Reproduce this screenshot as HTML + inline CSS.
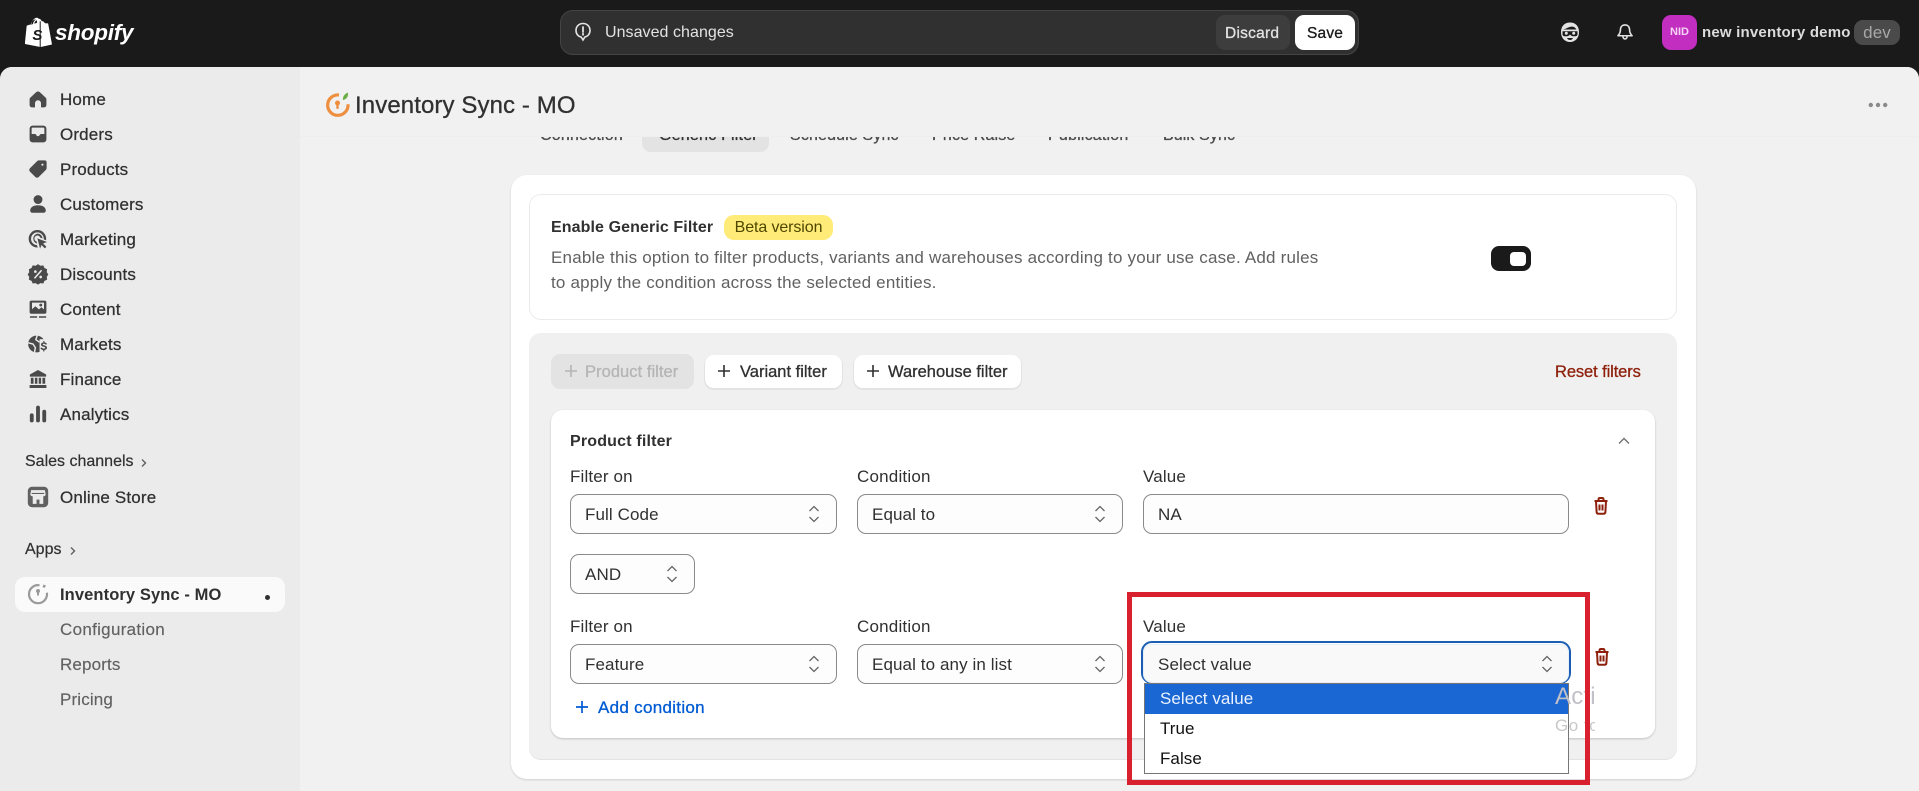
<!DOCTYPE html>
<html lang="en"><head><meta charset="utf-8"><title>Inventory Sync - MO</title>
<style>
*{box-sizing:border-box;margin:0;padding:0}
html,body{width:1919px;height:791px;overflow:hidden;background:#1a1a1a}
body{position:relative;font-family:"Liberation Sans",Arial,sans-serif;font-size:17px;color:#303030}
#w{position:absolute;left:0;top:0;width:1919px;height:791px;overflow:hidden;filter:blur(.3px)}
.a{position:absolute}
.t{position:absolute;white-space:nowrap;line-height:20px;letter-spacing:.15px;margin-top:1px}
.m{-webkit-text-stroke:.3px currentColor}
.nav{left:60px;color:#303030;-webkit-text-stroke:.25px #303030}
.sub{left:60px;color:#616161;-webkit-text-stroke:.15px #616161}
.ic{position:absolute;left:26px;width:24px;height:24px;fill:#4a4a4a}
.lab{color:#303030}
.sel{position:absolute;height:40px;background:#fdfdfd;border:1px solid #8a8a8a;border-radius:9px;color:#303030;line-height:40px;padding-left:14px;letter-spacing:.1px;white-space:nowrap}
.car{position:absolute;width:12px;height:20px;fill:none;stroke:#666;stroke-width:1.300}
.btn{position:absolute;top:355px;height:33px;background:#fff;border-radius:9px;box-shadow:0 1px 0 1px #e3e3e3,0 1.500px 0 #b5b5b5}
.row{position:absolute;left:1px;width:423px;height:30px;line-height:30px;padding-left:15px;color:#111;letter-spacing:.05px}
</style></head><body><div id="w">

<!-- Top bar -->
<svg class="a" style="left:25px;top:17px" width="27" height="31" viewBox="0 0 27 31"><path fill="#fff" d="M18.500 4.500 17 5c-.6-2-1.600-3.200-3-3.200h-.3C13.200 1 12.500.8 11.900.8 8.500.8 6.800 5 6.300 7.200L2.800 8.300c-1 .3-1.100.4-1.200 1.300L-.2 27l14.900 2.900V4.200zM12.100 5.800l-2.900.9c.5-2 1.500-3 2.400-3.400.3.600.5 1.400.5 2.500zM10.400 2.500c.2 0 .3 0 .5.1-1.200.6-2.500 2-3 4.500l-2.300.7c.6-2 2.200-5.300 4.800-5.300z"/><path fill="#fff" d="M15.700 4v26L27 27.500 23.200 6.700c0-.200-.2-.300-.4-.300l-2.700-.2-2-2z"/><text x="7.400" y="23" font-family="Liberation Sans" font-size="15" font-weight="bold" font-style="italic" fill="#1a1a1a">S</text></svg>
<div class="t" style="left:55px;top:20px;font-size:22.500px;line-height:24px;font-weight:bold;font-style:italic;color:#fff;letter-spacing:-.25px">shopify</div>

<div class="a" style="left:560px;top:10px;width:799px;height:45px;background:#303030;border:1px solid #444;border-radius:13px"></div>
<svg class="a" style="left:573px;top:21px" width="20" height="22" viewBox="0 0 20 22" fill="none" stroke="#e3e3e3" stroke-width="1.600"><path d="M10 2.500c4 0 7 2.800 7 7 0 3.600-2.300 6-5.200 6.600L10 19l-1.800-2.900C5.300 15.500 3 13 3 9.500c0-4.200 3-7 7-7z"/><path d="M10 6v5M10 12.600v1.300" stroke-linecap="round" stroke-width="1.800"/></svg>
<div class="t" style="left:605px;top:22px;color:#e3e3e3;font-size:16px;letter-spacing:.05px">Unsaved changes</div>
<div class="a" style="left:1216px;top:15px;width:74px;height:35px;background:#3d3d3d;border-radius:9px"></div>
<div class="t m" style="left:1225px;top:23px;color:#e3e3e3;font-size:15.500px;letter-spacing:.25px">Discard</div>
<div class="a" style="left:1295px;top:15px;width:60px;height:35px;background:#fff;border-radius:9px"></div>
<div class="t m" style="left:1307px;top:23px;color:#1a1a1a;font-size:15.500px;letter-spacing:.2px">Save</div>

<svg class="a" style="left:1558px;top:20px" width="24" height="24" viewBox="0 0 24 24"><path fill="#e3e3e3" d="M12 2.500c5.300 0 9 3.500 9 9.500s-3.700 10-9 10-9-4-9-10S6.700 2.500 12 2.500z"/><path fill="#1a1a1a" d="M5 9.500c3-.5 5-2.500 9-3 2 .2 3.500 1.300 4.500 3H5zM4.500 11.300h15v3c0 1.300-1 2-2.300 2H15c-1.200 0-2-.8-3-1.800-1 1-1.800 1.800-3 1.800H6.800c-1.300 0-2.300-.7-2.300-2z"/><circle cx="8.300" cy="13.300" r="1.500" fill="#e3e3e3"/><circle cx="15.700" cy="13.300" r="1.500" fill="#e3e3e3"/><path fill="#1a1a1a" d="M9 18h6c-.6 1.300-1.600 2-3 2s-2.400-.7-3-2z"/></svg>
<svg class="a" style="left:1615px;top:22px" width="20" height="20" viewBox="0 0 24 24" fill="none" stroke="#e3e3e3" stroke-width="1.900" stroke-linejoin="round"><path d="M12 3.500c-3.400 0-5.500 2.500-5.500 6 0 3.200-1 5-3 7h17c-2-2-3-3.800-3-7 0-3.500-2.100-6-5.500-6z"/><path d="M9.500 17c0 2 1 3.400 2.500 3.400s2.500-1.400 2.500-3.400"/></svg>
<div class="a" style="left:1662px;top:15px;width:35px;height:35px;background:#c22fc0;border-radius:9px;color:#f7d3f5;font-size:11px;font-weight:bold;text-align:center;line-height:35px">NID</div>
<div class="t" style="left:1702px;top:22px;color:#dcdcdc;font-size:15px;font-weight:bold;letter-spacing:.2px">new inventory demo</div>
<div class="a" style="left:1854px;top:20px;width:46px;height:25px;background:#4a4a4a;border-radius:9px;color:#a8a8a8;text-align:center;line-height:25px;letter-spacing:.1px">dev</div>

<!-- Main -->
<div class="a" style="left:0;top:67px;width:1919px;height:724px;background:#f1f1f1;border-radius:12px 12px 0 0;overflow:hidden">
  <div class="a" style="left:0;top:0;width:300px;height:724px;background:#ebebeb"></div>
</div>

<!-- Sidebar icons -->
<svg class="ic" style="top:87px" viewBox="0 0 20 20"><path d="M3.500 9 8.500 4.300a2.200 2.200 0 0 1 3 0L16.500 9c.4.4.5.9.5 1.400V15a2 2 0 0 1-2 2h-2.500v-3.500a2.500 2.500 0 0 0-5 0V17H5a2 2 0 0 1-2-2v-4.600c0-.5.100-1 .5-1.400z"/></svg>
<svg class="ic" style="top:122px" viewBox="0 0 20 20"><path fill-rule="evenodd" d="M5.500 3h9A2.500 2.500 0 0 1 17 5.500v9a2.500 2.500 0 0 1-2.500 2.500h-9A2.500 2.500 0 0 1 3 14.500v-9A2.500 2.500 0 0 1 5.500 3zM5.500 4.700a.8.8 0 0 0-.8.8V10h2.800c.5 0 .8.300 1 .7.300.7.800 1.100 1.500 1.100s1.200-.4 1.500-1.100c.2-.4.500-.7 1-.7h2.800V5.500a.8.8 0 0 0-.8-.8z"/></svg>
<svg class="ic" style="top:157px" viewBox="0 0 20 20"><path fill-rule="evenodd" d="M10.800 2.800h4.700A1.700 1.700 0 0 1 17.200 4.500v4.700c0 .6-.2 1.100-.6 1.500l-6 6a2 2 0 0 1-2.800 0l-4.500-4.500a2 2 0 0 1 0-2.800l6-6c.4-.4 1-.6 1.500-.6zM13.700 5.500a.9.9 0 1 0 0 1.800.9.9 0 0 0 0-1.800z"/></svg>
<svg class="ic" style="top:192px" viewBox="0 0 20 20"><circle cx="10" cy="6.300" r="3.700"/><path d="M3.500 15.500c0-2.900 2.800-4.500 6.500-4.500s6.500 1.600 6.500 4.500c0 1-.7 1.800-1.800 1.800H5.300c-1.100 0-1.800-.8-1.800-1.800z"/></svg>
<svg class="ic" style="top:227px" viewBox="0 0 20 20"><path fill-rule="evenodd" d="M9.500 2.500a7.300 7.300 0 0 1 7.300 7.300c0 .4 0 .8-.1 1.200l-1.900-.7v-.5a5.300 5.300 0 1 0-5.700 5.300l.7 1.900-.3.100a7.300 7.300 0 0 1 0-14.600z"/><path d="M9.500 5.500a4.300 4.300 0 0 1 4.300 4.100l-1.900-.7a2.500 2.500 0 1 0-3.200 3.100l.7 1.900a4.300 4.300 0 0 1 .1-8.400z"/><path d="M9.500 9.500l8 3-3.300 1.200 2.800 2.800-1.300 1.300-2.800-2.800L11.700 18z"/></svg>
<svg class="ic" style="top:262px" viewBox="0 0 20 20"><path d="M10 1.800l2 1.300 2.400-.3 1 2.200 2.200 1-.3 2.400 1.300 2-1.300 2 .3 2.300-2.200 1-1 2.200-2.400-.3-2 1.300-2-1.300-2.400.3-1-2.200-2.200-1 .3-2.300L1.400 10.400l1.300-2-.3-2.400 2.200-1 1-2.200 2.400.3z"/><circle cx="7.800" cy="8" r="1.100" fill="#ebebeb"/><circle cx="12.200" cy="12.500" r="1.100" fill="#ebebeb"/><path d="M12.600 7.300l-5.200 5.900" stroke="#ebebeb" stroke-width="1.300" stroke-linecap="round"/></svg>
<svg class="ic" style="top:297px" viewBox="0 0 20 20"><path fill-rule="evenodd" d="M4.500 3h11A1.500 1.500 0 0 1 17 4.500v8a1.500 1.500 0 0 1-1.500 1.500h-11A1.500 1.500 0 0 1 3 12.500v-8A1.500 1.500 0 0 1 4.500 3zM5 4.700v5.500l2.800-2.500 3 2.600 2-1.800 2.200 1.800V4.700z"/><circle cx="12.300" cy="6.700" r="1.200"/><path d="M3.300 16h6v1.300h-6zM10.800 16h6v1.300h-6z"/></svg>
<svg class="ic" style="top:332px" viewBox="0 0 20 20"><circle cx="8.800" cy="10" r="7"/><path d="M9.500 2.500 8.200 6.300l3 2.200M1.800 9l4 1 2 3-.8 4.500" fill="none" stroke="#ebebeb" stroke-width="1.200"/><rect x="11.300" y="6" width="9" height="12.500" fill="#ebebeb"/><path d="M15.400 7.500v1.100c1.100.1 1.900.7 2.100 1.600l-1.300.3c-.1-.4-.5-.7-1.200-.7-.6 0-1 .2-1 .6s.3.500 1.100.7c1.300.3 2.400.7 2.400 2 0 1.100-.9 1.800-2.100 1.900v1.100h-1.100V15c-1.200-.1-2.100-.8-2.300-1.800l1.300-.3c.2.500.6.900 1.500.9.700 0 1.200-.3 1.200-.7 0-.5-.5-.6-1.300-.8-1.200-.3-2.200-.7-2.200-1.900 0-1 .8-1.700 2-1.800V7.500z"/></svg>
<svg class="ic" style="top:367px" viewBox="0 0 20 20"><path d="M10 2.500l6.800 3.800V8H3.200V6.300z"/><path d="M4 9h2.300v5H4zM7.400 9h2.100v5H7.400zM10.600 9h2v5h-2zM13.700 9H16v5h-2.300zM3 15h14v2.500H3z"/></svg>
<svg class="ic" style="top:402px" viewBox="0 0 20 20"><rect x="3.200" y="9.500" width="3.200" height="7.500" rx="1.600"/><rect x="8.400" y="3" width="3.200" height="14" rx="1.600"/><rect x="13.600" y="6.500" width="3.200" height="10.500" rx="1.600"/></svg>
<svg class="ic" style="top:485px" viewBox="0 0 20 20"><rect x="1.500" y="1.500" width="17" height="17" rx="3.500" fill="#616161"/><path fill="#ebebeb" d="M4.300 4.300h11.400l.7 3.500c0 1-1 1.600-2 1.600v6.300h-3.200v-3.500H8.800v3.500H5.600V9.400c-1 0-2-.6-2-1.600z"/><path fill="#616161" d="M4.800 6.600h10.400v.9H4.800z"/></svg>

<!-- Sidebar text -->
<div class="t nav" style="top:89px">Home</div>
<div class="t nav" style="top:124px">Orders</div>
<div class="t nav" style="top:159px">Products</div>
<div class="t nav" style="top:194px">Customers</div>
<div class="t nav" style="top:229px">Marketing</div>
<div class="t nav" style="top:264px">Discounts</div>
<div class="t nav" style="top:299px">Content</div>
<div class="t nav" style="top:334px">Markets</div>
<div class="t nav" style="top:369px">Finance</div>
<div class="t nav" style="top:404px">Analytics</div>
<div class="t" style="left:25px;top:451px;font-size:16px;letter-spacing:0;-webkit-text-stroke:.2px #303030">Sales channels</div>
<svg class="a" style="left:139px;top:456px;fill:none;stroke:#616161;stroke-width:1.400" width="10" height="14" viewBox="0 0 10 14"><path d="M3 3.500l3.500 3.500-3.500 3.500"/></svg>
<div class="t nav" style="top:487px">Online Store</div>
<div class="t" style="left:25px;top:539px;font-size:16px;letter-spacing:0;-webkit-text-stroke:.2px #303030">Apps</div>
<svg class="a" style="left:68px;top:544px;fill:none;stroke:#616161;stroke-width:1.400" width="10" height="14" viewBox="0 0 10 14"><path d="M3 3.500l3.500 3.500-3.500 3.500"/></svg>
<div class="a" style="left:15px;top:577px;width:270px;height:35px;background:#fafafa;border-radius:10px"></div>
<svg class="a" style="left:26px;top:582px" width="24" height="24" viewBox="0 0 24 24" fill="none" stroke="#9a9a9a" stroke-width="2.200"><path d="M13.500 3.300a9 9 0 1 0 7.400 7.400"/><path d="M11 8h2v5.500h-2z" fill="#9a9a9a" stroke="none"/><circle cx="12" cy="9" r="2" fill="#9a9a9a" stroke="none"/><path d="M17.500 2.500l2.500 1-1.500 2.500-2-1z" fill="#9a9a9a" stroke="none"/></svg>
<div class="t" style="left:60px;top:584px;font-size:16.500px;font-weight:bold;color:#303030;letter-spacing:.1px">Inventory Sync - MO</div>
<div class="a" style="left:264.500px;top:594.500px;width:5px;height:5px;border-radius:50%;background:#303030"></div>
<div class="t sub" style="top:619px;letter-spacing:.3px">Configuration</div>
<div class="t sub" style="top:654px">Reports</div>
<div class="t sub" style="top:689px">Pricing</div>

<!-- Tabs (sit under the header) -->
<div class="a" style="left:642px;top:118px;width:127px;height:34px;background:#e3e3e3;border-radius:9px"></div>
<div class="t m" style="left:540px;top:125px;font-size:16px;letter-spacing:.2px;color:#4a4a4a">Connection</div>
<div class="t m" style="left:659px;top:125px;font-size:16px;letter-spacing:.2px;color:#303030">Generic Filter</div>
<div class="t m" style="left:790px;top:125px;font-size:16px;letter-spacing:.15px;color:#4a4a4a">Schedule Sync</div>
<div class="t m" style="left:932px;top:125px;font-size:16px;letter-spacing:.15px;color:#4a4a4a">Price Raise</div>
<div class="t m" style="left:1048px;top:125px;font-size:16px;letter-spacing:.2px;color:#4a4a4a">Publication</div>
<div class="t m" style="left:1163px;top:125px;font-size:16px;letter-spacing:.1px;color:#4a4a4a">Bulk Sync</div>

<!-- App header -->
<div class="a" style="left:300px;top:67px;width:1619px;height:70px;background:#f1f1f1;border-bottom:1px solid #eeeeee;border-top-right-radius:12px"></div>
<svg class="a" style="left:324px;top:91px" width="27" height="27" viewBox="0 0 27 27" fill="none"><path d="M15 4a10.200 10.200 0 1 0 9 9.300" stroke="#ee8f3f" stroke-width="3.200"/><circle cx="13.500" cy="12" r="2.500" fill="#ee8f3f"/><rect x="12.300" y="12" width="2.400" height="5.800" fill="#ee8f3f"/><path d="M19 9c-.4-3.200 1.200-6 5-7.500.4 3.800-1.100 6.700-5 7.500z" fill="#6aae45"/></svg>
<div class="t m" style="left:355px;top:90px;font-size:24px;line-height:30px;letter-spacing:.1px;color:#303030">Inventory Sync - MO</div>
<svg class="a" style="left:1868px;top:101px" width="20" height="8" viewBox="0 0 20 8" fill="#8a8a8a"><circle cx="2.800" cy="4" r="2.200"/><circle cx="10" cy="4" r="2.200"/><circle cx="17.200" cy="4" r="2.200"/></svg>

<!-- Main card -->
<div class="a" style="left:511px;top:175px;width:1185px;height:604px;background:#fff;border-radius:16px;box-shadow:0 1px 2px rgba(0,0,0,.14)"></div>
<div class="a" style="left:529px;top:194px;width:1148px;height:126px;background:#fff;border:1px solid #ebebeb;border-radius:12px"></div>
<div class="t" style="left:551px;top:217px;font-size:16px;font-weight:bold;letter-spacing:.1px;color:#303030">Enable Generic Filter</div>
<div class="a" style="left:724px;top:215px;width:109px;height:25px;background:#ffeb78;border-radius:10px;color:#4f4700;text-align:center;line-height:25px;letter-spacing:-.1px;font-size:16px;white-space:nowrap">Beta version</div>
<div class="t" style="left:551px;top:247px;color:#616161;letter-spacing:.2px">Enable this option to filter products, variants and warehouses according to your use case. Add rules</div>
<div class="t" style="left:551px;top:272px;color:#616161;letter-spacing:.2px">to apply the condition across the selected entities.</div>
<div class="a" style="left:1491px;top:246px;width:40px;height:25px;background:#1a1a1a;border-radius:8px"></div>
<div class="a" style="left:1510px;top:252px;width:16px;height:14px;background:#fff;border-radius:4px"></div>

<!-- Gray section -->
<div class="a" style="left:529px;top:333px;width:1148px;height:426px;background:#f0f0f0;border-radius:12px;box-shadow:0 1px 0 #e3e3e3"></div>
<div class="a" style="left:551px;top:354px;width:143px;height:35px;background:#e3e3e3;border-radius:9px"></div>
<svg class="a" style="left:563px;top:363px" width="16" height="16" viewBox="0 0 16 16" stroke="#b5b5b5" stroke-width="1.600"><path d="M8 2v12M2 8h12"/></svg>
<div class="t m" style="left:585px;top:361px;color:#b5b5b5;font-size:16.500px;letter-spacing:.05px">Product filter</div>
<div class="btn" style="left:705px;width:137px"></div>
<svg class="a" style="left:716px;top:363px" width="16" height="16" viewBox="0 0 16 16" stroke="#303030" stroke-width="1.600"><path d="M8 2v12M2 8h12"/></svg>
<div class="t m" style="left:740px;top:361px;color:#303030;font-size:16.500px;letter-spacing:0">Variant filter</div>
<div class="btn" style="left:854px;width:167px"></div>
<svg class="a" style="left:865px;top:363px" width="16" height="16" viewBox="0 0 16 16" stroke="#303030" stroke-width="1.600"><path d="M8 2v12M2 8h12"/></svg>
<div class="t m" style="left:888px;top:361px;color:#303030;font-size:16.500px;letter-spacing:0">Warehouse filter</div>
<div class="t m" style="left:1555px;top:361px;color:#8e1f0b;font-size:16.500px;letter-spacing:-.1px">Reset filters</div>

<!-- Product filter card -->
<div class="a" style="left:551px;top:410px;width:1104px;height:328px;background:#fff;border-radius:12px;box-shadow:0 1px 2px rgba(0,0,0,.2)"></div>
<div class="t" style="left:570px;top:431px;font-size:16px;font-weight:bold;letter-spacing:.18px;color:#303030">Product filter</div>
<svg class="a" style="left:1617px;top:436px;fill:none;stroke:#707070;stroke-width:1.400" width="14" height="10" viewBox="0 0 14 10"><path d="M2 7.500l5-5 5 5"/></svg>

<div class="t lab" style="left:570px;top:466px">Filter on</div>
<div class="t lab" style="left:857px;top:466px;letter-spacing:.2px">Condition</div>
<div class="t lab" style="left:1143px;top:466px">Value</div>
<div class="sel" style="left:570px;top:494px;width:267px">Full Code</div>
<svg class="car" style="left:808px;top:504px" viewBox="0 0 12 20"><path d="M1.500 7 6 2.500 10.500 7M1.500 13 6 17.500 10.500 13"/></svg>
<div class="sel" style="left:857px;top:494px;width:266px">Equal to</div>
<svg class="car" style="left:1094px;top:504px" viewBox="0 0 12 20"><path d="M1.500 7 6 2.500 10.500 7M1.500 13 6 17.500 10.500 13"/></svg>
<div class="sel" style="left:1143px;top:494px;width:426px">NA</div>
<svg class="a" style="left:1590px;top:495px" width="22" height="22" viewBox="0 0 22 22" fill="none" stroke="#8e1f0b" stroke-width="2"><path d="M4.500 6h13M8.500 6V4.500c0-1 .6-1.500 1.500-1.500h2c.9 0 1.500.5 1.500 1.500V6M6 6l.6 11c.1 1 .7 1.800 1.900 1.800h5c1.200 0 1.800-.8 1.900-1.800L16 6M9.500 9.500v6M12.500 9.500v6"/></svg>

<div class="sel" style="left:570px;top:554px;width:125px">AND</div>
<svg class="car" style="left:666px;top:564px" viewBox="0 0 12 20"><path d="M1.500 7 6 2.500 10.500 7M1.500 13 6 17.500 10.500 13"/></svg>

<div class="t lab" style="left:570px;top:616px">Filter on</div>
<div class="t lab" style="left:857px;top:616px;letter-spacing:.2px">Condition</div>
<div class="sel" style="left:570px;top:644px;width:267px">Feature</div>
<svg class="car" style="left:808px;top:654px" viewBox="0 0 12 20"><path d="M1.500 7 6 2.500 10.500 7M1.500 13 6 17.500 10.500 13"/></svg>
<div class="sel" style="left:857px;top:644px;width:266px">Equal to any in list</div>
<svg class="car" style="left:1094px;top:654px" viewBox="0 0 12 20"><path d="M1.500 7 6 2.500 10.500 7M1.500 13 6 17.500 10.500 13"/></svg>
<svg class="a" style="left:574px;top:699px" width="16" height="16" viewBox="0 0 16 16" stroke="#005bd3" stroke-width="1.700"><path d="M8 2v12M2 8h12"/></svg>
<div class="t m" style="left:598px;top:697px;color:#005bd3;letter-spacing:.3px">Add condition</div>

<!-- Highlighted value select -->
<div class="t lab" style="left:1143px;top:616px">Value</div>
<div class="a" style="left:1141px;top:641px;width:430px;height:43px;border:2px solid #1a5fb4;border-radius:11px"></div>
<div class="sel" style="left:1143px;top:644px;width:426px;height:39px;border-color:#e8eef8;background:#f9f9f9;line-height:39px">Select value</div>
<svg class="car" style="left:1541px;top:654px" viewBox="0 0 12 20"><path d="M1.500 7 6 2.500 10.500 7M1.500 13 6 17.500 10.500 13"/></svg>
<svg class="a" style="left:1591px;top:646px" width="22" height="22" viewBox="0 0 22 22" fill="none" stroke="#8e1f0b" stroke-width="2"><path d="M4.500 6h13M8.500 6V4.500c0-1 .6-1.500 1.500-1.500h2c.9 0 1.500.5 1.500 1.500V6M6 6l.6 11c.1 1 .7 1.800 1.900 1.800h5c1.200 0 1.800-.8 1.900-1.800L16 6M9.500 9.500v6M12.500 9.500v6"/></svg>

<div class="a" style="left:1144px;top:683px;width:425px;height:91px;background:#fff;border:1px solid #767676">
  <div class="row" style="left:0;top:0;background:#1a66d2;color:#eaf3ff">Select value</div>
  <div class="row" style="left:0;top:30px">True</div>
  <div class="row" style="left:0;top:60px">False</div>
</div>

<div class="a" style="left:1555px;top:680px;width:40px;height:60px;overflow:hidden">
  <div class="t" style="left:0;top:1px;font-size:24px;line-height:30px;letter-spacing:.2px;color:#c0c0c8">Activate</div>
  <div class="t" style="left:0;top:35px;font-size:17px;letter-spacing:.5px;color:#c8c8c8">Go to</div>
</div>

<!-- Red annotation box -->
<div class="a" style="left:1127px;top:592px;width:463px;height:193px;border:5px solid #d9202f"></div>

</div></body></html>
